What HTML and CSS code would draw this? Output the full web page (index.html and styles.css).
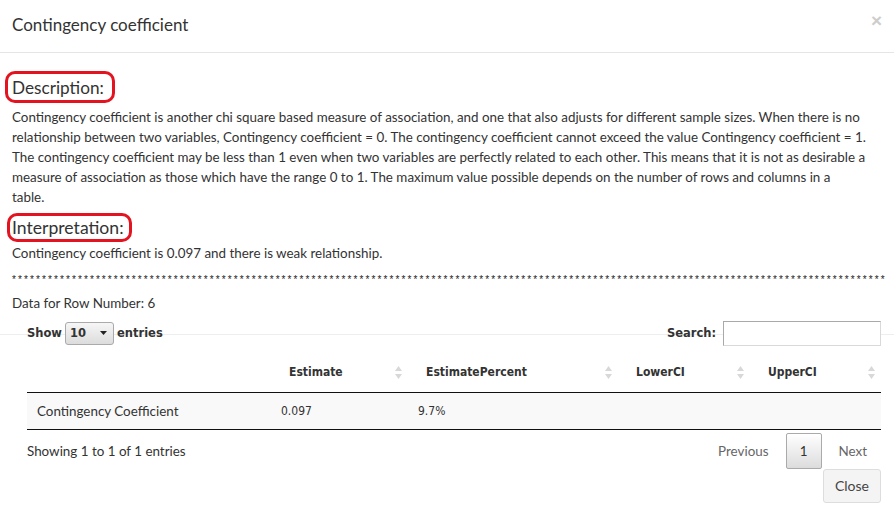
FILE: index.html
```html
<!DOCTYPE html>
<html>
<head>
<meta charset="utf-8">
<link rel="stylesheet" href="styles.css">
</head>
<body>
<div class="modal">
  <div class="modal-header">
    <h4 class="modal-title">Contingency coefficient</h4>
    <span class="close">×</span>
  </div>
  <div class="modal-body">
    <h3 class="anno anno-desc">Description:</h3>
    <p class="desc">Contingency coefficient is another chi square based measure of association, and one that also adjusts for different sample sizes. When there is no relationship between two variables, Contingency coefficient = 0. The contingency coefficient cannot exceed the value Contingency coefficient = 1. The contingency coefficient may be less than 1 even when two variables are perfectly related to each other. This means that it is not as desirable a measure of association as those which have the range 0 to 1. The maximum value possible depends on the number of rows and columns in a<br>table.</p>
    <h3 class="anno anno-interp">Interpretation:</h3>
    <p class="interp">Contingency coefficient is 0.097 and there is weak relationship.</p>
    <div class="stars">**************************************************************************************************************************************************</div>
    <p class="rownum">Data for Row Number: 6</p>
    <div class="dt">
      <div class="dt-top">
        <label class="dt-length">Show <span class="select"><span>10</span><svg width="7" height="4" viewBox="0 0 7 4"><path d="M0 0H7L3.5 4Z" fill="#222"/></svg></span> entries</label>
        <label class="dt-filter">Search: <input type="text" class="search"></label>
      </div>
      <table class="dt-table">
        <colgroup>
          <col class="c1"><col class="c2"><col class="c3"><col class="c4"><col class="c5">
        </colgroup>
        <thead>
          <tr>
            <th></th>
            <th><span>Estimate</span><svg class="sort" width="7" height="13" viewBox="0 0 7 13"><path d="M3.5 0L7 5H0Z M3.5 13L0 8H7Z" fill="#d8d8d8"/></svg></th>
            <th><span>EstimatePercent</span><svg class="sort" width="7" height="13" viewBox="0 0 7 13"><path d="M3.5 0L7 5H0Z M3.5 13L0 8H7Z" fill="#d8d8d8"/></svg></th>
            <th><span>LowerCI</span><svg class="sort" width="7" height="13" viewBox="0 0 7 13"><path d="M3.5 0L7 5H0Z M3.5 13L0 8H7Z" fill="#d8d8d8"/></svg></th>
            <th><span>UpperCI</span><svg class="sort" width="7" height="13" viewBox="0 0 7 13"><path d="M3.5 0L7 5H0Z M3.5 13L0 8H7Z" fill="#d8d8d8"/></svg></th>
          </tr>
        </thead>
        <tbody>
          <tr>
            <td class="name">Contingency Coefficient</td>
            <td class="num">0.097</td>
            <td class="num">9.7%</td>
            <td></td>
            <td></td>
          </tr>
        </tbody>
      </table>
      <div class="dt-bottom">
        <div class="dt-info">Showing 1 to 1 of 1 entries</div>
        <div class="dt-paginate">
          <span class="pg-link">Previous</span>
          <span class="pg-current">1</span>
          <span class="pg-link">Next</span>
        </div>
      </div>
    </div>
  </div>
  <div class="modal-footer">
    <button class="btn-close">Close</button>
  </div>
</div>
</body>
</html>
```

FILE: styles.css
```css
* { box-sizing: border-box; }
html, body {
  margin: 0;
  padding: 0;
  background: #fff;
}
body {
  font-family: "Lato", "Liberation Sans", sans-serif;
  font-size: 13.4px;
  color: #333;
  width: 894px;
  height: 512px;
  overflow: hidden;
}
.modal {
  width: 894px;
}
.modal-header {
  height: 53px;
  border-bottom: 1px solid #e5e5e5;
  display: flex;
  align-items: center;
  justify-content: space-between;
  padding: 0 12px 4px 12px;
}
.modal-title {
  margin: 0;
  font-size: 17px;
  font-weight: 400;
  color: #333;
}
.close {
  font-family: "Liberation Sans", sans-serif;
  font-size: 19px;
  font-weight: 700;
  color: #cdcdcd;
  margin-top: -6px;
}
.modal-body {
  padding: 18px 12px 0 12px;
}
.anno {
  display: inline-block;
  margin: 0 0 0 -7px;
  padding: 1px 8px 0 4px;
  border: 3px solid #e3141f;
  border-radius: 10px;
  font-size: 17.2px;
  font-weight: 400;
  line-height: 25px;
  color: #333;
}
.anno-interp {
  margin-left: -5px;
  padding: 0 5px 0 2px;
  line-height: 23px;
  font-size: 17.6px;
}
p { margin: 0; }
.desc {
  line-height: 20px;
  margin-top: 4px;
  margin-bottom: 6px;
}
.interp {
  line-height: 20px;
  margin-top: 1px;
}
.stars {
  font-family: "Liberation Sans", sans-serif;
  font-size: 10px;
  letter-spacing: 2.1px;
  white-space: nowrap;
  line-height: 16px;
  margin-top: 9px;
  color: #222;
}
.rownum {
  margin-top: 5px;
  line-height: 20px;
}
.dt {
  margin: 7px 1px 0 15px;
}
.dt-top {
  position: relative;
  display: flex;
  justify-content: space-between;
  align-items: center;
  height: 26px;
  font-family: "DejaVu Sans", sans-serif;
  font-size: 11.5px;
  font-weight: 700;
  color: #333;
}
.dt-top::before {
  content: "";
  position: absolute;
  left: -27px;
  right: -13px;
  top: 14px;
  border-top: 1px solid #eee;
  z-index: 0;
}
.dt-length, .dt-filter {
  position: relative;
  z-index: 1;
  display: flex;
  align-items: center;
}
.select {
  display: inline-flex;
  align-items: center;
  justify-content: space-between;
  width: 49px;
  height: 23px;
  margin: 0 3px 0 3px;
  padding: 0 6px 0 4px;
  border: 1px solid #aaa;
  border-radius: 3px;
  background: linear-gradient(#f6f6f6, #dcdcdc);
  font-size: 11.5px;
  font-weight: 700;
}
.search {
  width: 158px;
  height: 25px;
  margin: 0 0 0 7px;
  border: 1px solid;
  border-color: #a9a9a9 #d9d9d9 #d9d9d9 #a9a9a9;
  background: #fff;
}
.dt-table {
  width: 854px;
  border-collapse: collapse;
  table-layout: fixed;
  margin-top: 7px;
}
.c1 { width: 244px; }
.c2 { width: 137px; }
.c3 { width: 210px; }
.c4 { width: 132px; }
.c5 { width: 131px; }
.dt-table th {
  position: relative;
  text-align: left;
  font-family: "DejaVu Sans Condensed", "DejaVu Sans", sans-serif;
  font-size: 12px;
  font-weight: 700;
  color: #333;
  height: 39px;
  padding: 0 18px;
  border-bottom: 1px solid #111;
  vertical-align: middle;
}
.dt-table th .sort {
  position: absolute;
  right: 6px;
  top: 13px;
}
.dt-table td {
  height: 37px;
  padding: 0 10px;
  background: #f9f9f9;
  border-bottom: 1px solid #111;
  vertical-align: middle;
}
.dt-table td.num {
  font-family: "DejaVu Sans Condensed", "DejaVu Sans", sans-serif;
  font-size: 12px;
}
.dt-bottom {
  display: flex;
  justify-content: space-between;
  align-items: flex-start;
  padding-top: 3px;
}
.dt-info {
  padding-top: 10px;
}
.dt-paginate {
  display: flex;
  align-items: center;
}
.pg-link {
  color: #666;
  padding: 0 14px;
}
.pg-current {
  display: inline-flex;
  align-items: center;
  justify-content: center;
  width: 36px;
  height: 36px;
  border: 1px solid #aaa;
  border-radius: 2px;
  background: linear-gradient(#fff, #dcdcdc);
  color: #333;
  margin: 0 3px;
}
.modal-footer {
  display: flex;
  justify-content: flex-end;
  padding: 0 13px 0 0;
}
.btn-close {
  width: 58px;
  height: 34px;
  font-family: "Lato", sans-serif;
  font-size: 14px;
  color: #444;
  background: #f4f4f4;
  border: 1px solid #ddd;
  border-radius: 3px;
}
```
